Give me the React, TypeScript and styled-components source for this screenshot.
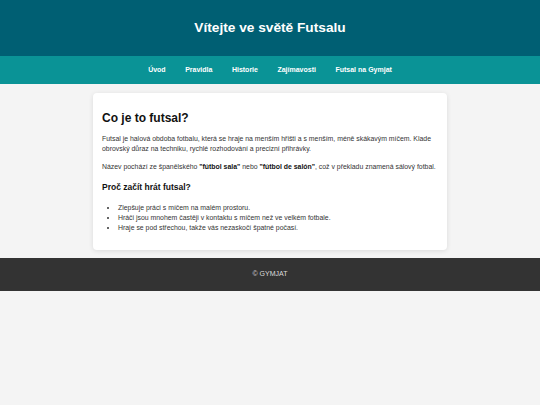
import React from "react";
import styled, { createGlobalStyle } from "styled-components";

const Global = createGlobalStyle`
  html, body { margin: 0; padding: 0; }
  body {
    background: #f4f4f4;
    font-family: "Liberation Sans", Arial, sans-serif;
    color: #333;
    font-size: 6.9px;
    line-height: 10px;
    -webkit-font-smoothing: antialiased;
  }
`;

const Header = styled.header`
  background: #005f73;
  color: #fff;
  height: 56px;
  display: flex;
  align-items: center;
  justify-content: center;
`;

const Title = styled.h1`
  margin: 0;
  font-size: 13.7px;
  font-weight: bold;
  line-height: 1.2;
`;

const Nav = styled.nav`
  background: #0a9396;
  height: 28px;
  display: flex;
  align-items: center;
  justify-content: center;
  gap: 19.5px;
`;

const NavLink = styled.a`
  color: #fff;
  font-weight: bold;
  font-size: 7px;
  text-decoration: none;
`;

const Card = styled.main`
  background: #fff;
  max-width: 354px;
  box-sizing: border-box;
  margin: 9px auto 8px;
  padding: 10px 9px;
  border-radius: 4px;
  box-shadow: 0 1px 5px rgba(0, 0, 0, 0.1);
`;

const H2 = styled.h2`
  font-size: 12px;
  color: #111;
  margin: 8px 0 9px;
  line-height: 1.2;
`;

const H3 = styled.h3`
  font-size: 8.5px;
  color: #111;
  margin: 10px 0 10px;
  line-height: 1.2;
`;

const P = styled.p`
  margin: 0 0 8px;
`;

const List = styled.ul`
  margin: 0 0 7px;
  padding-left: 16px;
`;

const Strong = styled.strong`
  color: #111;
`;

const Footer = styled.footer`
  background: #333;
  color: #ddd;
  height: 33px;
  display: flex;
  align-items: center;
  justify-content: center;
  font-size: 7px;
`;

export default function App() {
  return (
    <>
      <Global />
      <Header>
        <Title>Vítejte ve světě Futsalu</Title>
      </Header>
      <Nav>
        <NavLink href="#">Úvod</NavLink>
        <NavLink href="#">Pravidla</NavLink>
        <NavLink href="#">Historie</NavLink>
        <NavLink href="#">Zajímavosti</NavLink>
        <NavLink href="#">Futsal na Gymjat</NavLink>
      </Nav>
      <Card>
        <H2>Co je to futsal?</H2>
        <P>
          Futsal je halová obdoba fotbalu, která se hraje na menším hřišti a s
          menším, méně skákavým míčem. Klade obrovský důraz na techniku, rychlé
          rozhodování a precizní přihrávky.
        </P>
        <P>
          Název pochází ze španělského <Strong>"fútbol sala"</Strong> nebo{" "}
          <Strong>"fútbol de salón"</Strong>, což v překladu znamená sálový
          fotbal.
        </P>
        <H3>Proč začít hrát futsal?</H3>
        <List>
          <li>Zlepšuje práci s míčem na malém prostoru.</li>
          <li>Hráči jsou mnohem častěji v kontaktu s míčem než ve velkém fotbale.</li>
          <li>Hraje se pod střechou, takže vás nezaskočí špatné počasí.</li>
        </List>
      </Card>
      <Footer>© GYMJAT</Footer>
    </>
  );
}
